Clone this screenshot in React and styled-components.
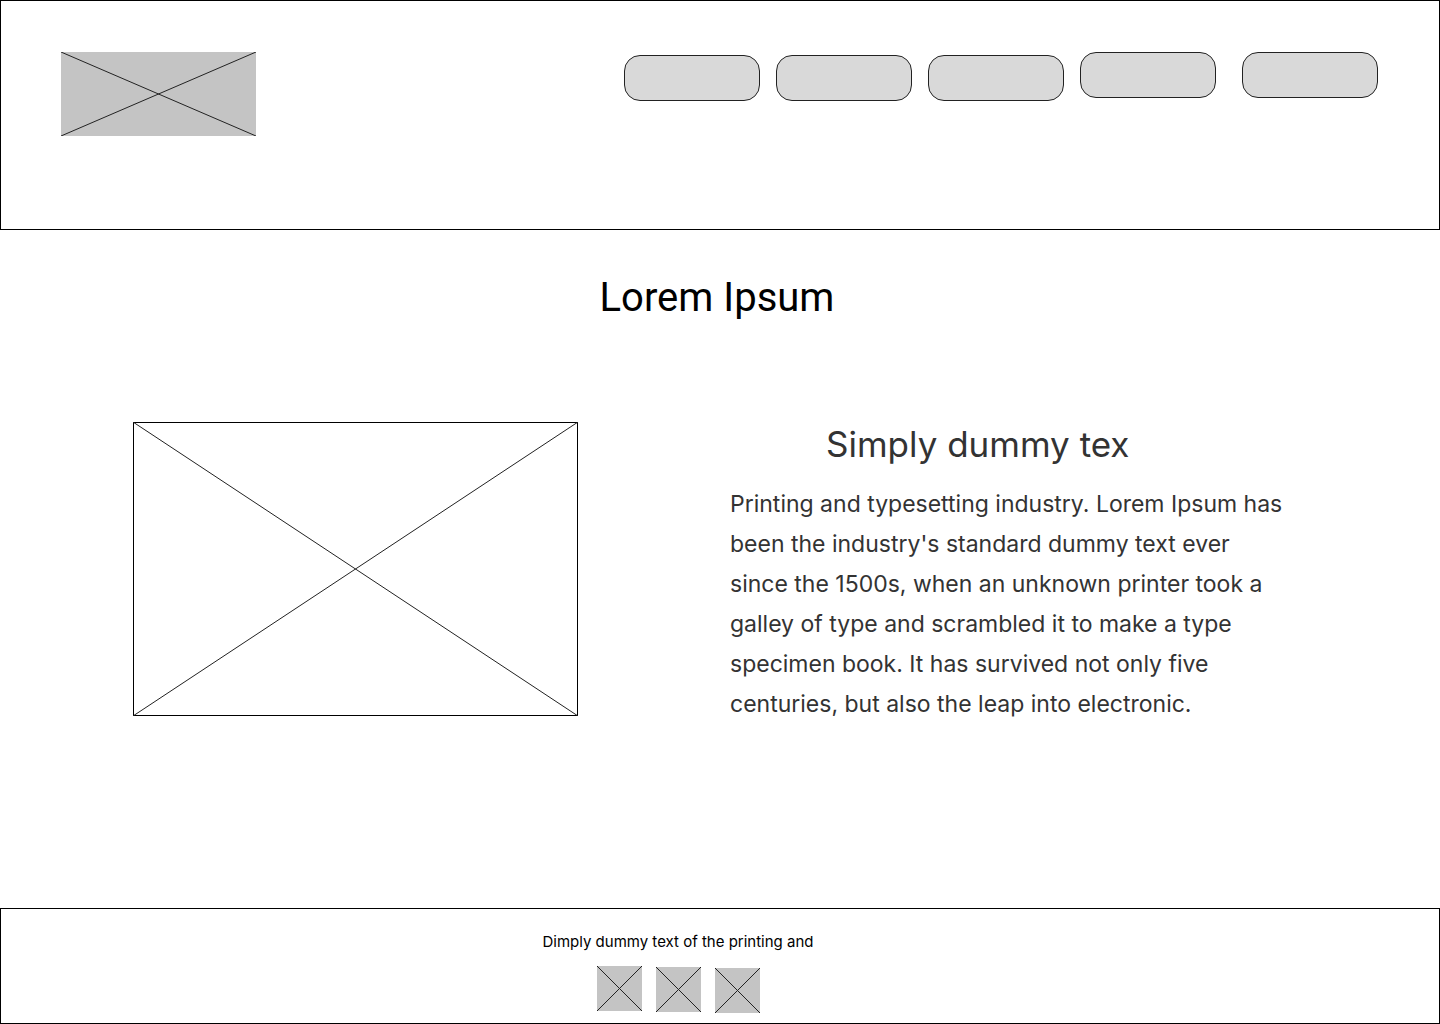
import React from "react";
import styled, { createGlobalStyle } from "styled-components";

const Global = createGlobalStyle`
  * { box-sizing: border-box; }
  html, body { margin: 0; padding: 0; background: #fff; }
  body { font-family: Inter, "Noto Sans", sans-serif; }
`;

const Page = styled.div`
  width: 1440px;
  min-height: 1024px;
  display: flex;
  flex-direction: column;
`;

const Header = styled.header`
  height: 230px;
  border: 1px solid #000;
  display: flex;
  align-items: flex-start;
  padding: 51px 0 0 60px;
`;

const Nav = styled.nav`
  display: flex;
  align-items: flex-start;
  margin-left: 368px;
`;

const NavButton = styled.div`
  width: 136px;
  height: 46px;
  background: #d9d9d9;
  border: 1px solid #222;
  border-radius: 16px;
  margin-top: ${(p) => p.$top || 0}px;
  margin-left: ${(p) => p.$gap ?? 16}px;
`;

const Title = styled.h1`
  margin: 44px 0 0;
  font-family: Roboto, "Liberation Sans", sans-serif;
  font-weight: 400;
  font-size: 40px;
  line-height: normal;
  color: #000;
  text-align: center;
  padding-right: 6px;
`;

const Content = styled.section`
  display: flex;
  align-items: flex-start;
  margin-top: 101px;
  padding-left: 133px;
`;

const TextCol = styled.div`
  margin-left: 152px;
  width: 580px;
  padding-top: 1px;
`;

const Heading = styled.h2`
  margin: 0 0 19px;
  padding-left: 96px;
  font-family: Inter, sans-serif;
  font-weight: 400;
  font-size: 35px;
  line-height: 42px;
  color: #333;
`;

const Paragraph = styled.p`
  margin: 0;
  font-family: Inter, sans-serif;
  font-size: 23px;
  line-height: 40px;
  color: #333;
  width: 560px;
`;

const Footer = styled.footer`
  margin-top: auto;
  height: 116px;
  border: 1px solid #000;
  display: flex;
  flex-direction: column;
  align-items: center;
  padding: 24px 84px 0 0;
`;

const FooterText = styled.div`
  font-family: Inter, sans-serif;
  font-size: 15px;
  line-height: 18px;
  color: #000;
`;

const Icons = styled.div`
  display: flex;
  gap: 14px;
  margin-top: 15px;
  align-items: flex-start;
`;

const Placeholder = ({ w, h, fill, stroke = "#222", border }) => (
  <svg width={w} height={h} viewBox={`0 0 ${w} ${h}`} style={{ display: "block", flex: "none" }}>
    <rect x={border ? 0.5 : 0} y={border ? 0.5 : 0} width={border ? w - 1 : w} height={border ? h - 1 : h}
      fill={fill} stroke={border ? "#000" : "none"} strokeWidth="1" />
    <line x1="0" y1="0" x2={w} y2={h} stroke={stroke} strokeWidth="1" />
    <line x1={w} y1="0" x2="0" y2={h} stroke={stroke} strokeWidth="1" />
  </svg>
);

const Logo = styled.div`
  width: 195px;
  height: 84px;
  flex: none;
`;

const IconBox = styled.div`
  width: 45px;
  height: 45px;
  margin-top: ${(p) => p.$top || 0}px;
`;

const ImageBox = styled.div`
  width: 445px;
  height: 294px;
  flex: none;
`;

export default function App() {
  return (
    <Page>
      <Global />
      <Header>
        <Logo>
          <Placeholder w={195} h={84} fill="#c4c4c4" />
        </Logo>
        <Nav>
          <NavButton $top={3} $gap={0} />
          <NavButton $top={3} />
          <NavButton $top={3} />
          <NavButton $top={0} />
          <NavButton $top={0} $gap={26} />
        </Nav>
      </Header>
      <Title>Lorem Ipsum</Title>
      <Content>
        <ImageBox>
          <Placeholder w={445} h={294} fill="#fff" border />
        </ImageBox>
        <TextCol>
          <Heading>Simply dummy tex</Heading>
          <Paragraph>
            Printing and typesetting industry. Lorem Ipsum has been the industry's standard dummy text ever
            since the 1500s, when an unknown printer took a galley of type and scrambled it to make a type
            specimen book. It has survived not only five centuries, but also the leap into electronic.
          </Paragraph>
        </TextCol>
      </Content>
      <Footer>
        <FooterText>Dimply dummy text of the printing and</FooterText>
        <Icons>
          <IconBox $top={0}><Placeholder w={45} h={45} fill="#c4c4c4" /></IconBox>
          <IconBox $top={1}><Placeholder w={45} h={45} fill="#c4c4c4" /></IconBox>
          <IconBox $top={2}><Placeholder w={45} h={45} fill="#c4c4c4" /></IconBox>
        </Icons>
      </Footer>
    </Page>
  );
}
